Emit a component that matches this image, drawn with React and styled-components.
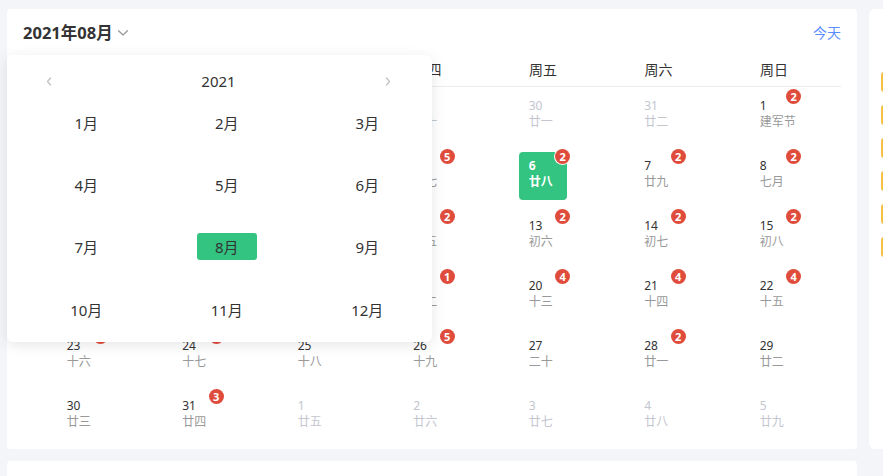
import React from "react";
import styled, { createGlobalStyle } from "styled-components";

const GlobalStyle = createGlobalStyle`
  html, body { margin: 0; padding: 0; }
  body {
    background: #f4f5f9;
    font-family: "Noto Sans", "Noto Sans CJK SC", sans-serif;
    color: #333;
    overflow: hidden;
  }
`;

const Page = styled.div`
  box-sizing: border-box;
  display: flex;
  align-items: flex-start;
  gap: 12px;
  width: 100%;
  height: 476px;
  padding: 9px 0 0 7px;
  overflow: hidden;
`;

const LeftColumn = styled.div`
  display: flex;
  flex-direction: column;
  gap: 12px;
  width: 850px;
  flex-shrink: 0;
`;

const Card = styled.div`
  position: relative;
  box-sizing: border-box;
  height: 440px;
  padding: 14px 16px 0;
  background: #fff;
  border-radius: 4px;
`;

const BottomCard = styled.div`
  height: 15px;
  background: #fff;
  border-radius: 4px 4px 0 0;
`;

const SideCard = styled.div`
  box-sizing: border-box;
  flex: 1;
  min-width: 0;
  height: 440px;
  padding: 63px 0 0 12px;
  background: #fff;
  border-radius: 6px 0 0 6px;
  display: flex;
  flex-direction: column;
  gap: 13px;
  overflow: hidden;
`;

const Tag = styled.div`
  flex-shrink: 0;
  width: 140px;
  height: 20px;
  background: #f6c045;
  border-radius: 3px;
`;

const Header = styled.div`
  display: flex;
  align-items: center;
  justify-content: space-between;
  height: 20px;
`;

const Title = styled.div`
  display: flex;
  align-items: center;
  gap: 4px;
  font-size: 16.5px;
  font-weight: 700;
  color: #333;
  line-height: 20px;
`;

const TodayLink = styled.span`
  font-size: 14px;
  color: #5b8cff;
  line-height: 20px;
`;

const WeekBar = styled.div`
  margin-top: 10px;
  border-bottom: 1px solid #ebedf0;
`;

const SevenCols = styled.div`
  display: grid;
  grid-template-columns: repeat(7, 115.5px);
`;

const WeekLabel = styled.div`
  height: 33px;
  line-height: 33px;
  padding-left: 44px;
  font-size: 14px;
  color: #333;
`;

const DayGrid = styled(SevenCols)`
  grid-auto-rows: 60px;
`;

const Cell = styled.div`
  display: flex;
  justify-content: center;
  align-items: flex-start;
  padding-top: 5px;
`;

const DayBox = styled.div`
  position: relative;
  box-sizing: border-box;
  width: 48px;
  height: 48px;
  padding: 6px 0 0 10px;
  border-radius: 4px;
  background: ${(p) => (p.$selected ? "#33c482" : "transparent")};
`;

const DayNum = styled.div`
  font-size: 12px;
  line-height: 16px;
  font-weight: ${(p) => (p.$selected ? 700 : 400)};
  color: ${(p) => (p.$selected ? "#fff" : p.$other ? "#c3c6cf" : "#333")};
`;

const Lunar = styled.div`
  font-size: 12px;
  line-height: 16px;
  white-space: nowrap;
  font-weight: ${(p) => (p.$selected ? 700 : 400)};
  color: ${(p) => (p.$selected ? "#fff" : p.$other ? "#c3c6cf" : "#999")};
`;

const Badge = styled.span`
  position: absolute;
  top: -3.5px;
  right: -3.5px;
  width: 15px;
  height: 15px;
  border-radius: 50%;
  background: #e04c3c;
  box-shadow: 0 0 0 1px #fff;
  color: #fff;
  font-size: 11px;
  font-weight: 700;
  line-height: 15px;
  text-align: center;
`;

const Popup = styled.div`
  position: absolute;
  left: 0;
  top: 46px;
  z-index: 2;
  box-sizing: border-box;
  width: 425px;
  height: 287px;
  padding-top: 16px;
  background: #fff;
  border-radius: 6px;
  box-shadow: 0 3px 14px rgba(0, 0, 0, 0.1);
  overflow: hidden;
`;

const YearRow = styled.div`
  display: flex;
  align-items: center;
  justify-content: space-between;
  height: 20px;
  padding: 0 40px 0 38px;
`;

const YearText = styled.span`
  font-size: 15px;
  color: #333;
`;

const Arrow = styled.span`
  display: flex;
  width: 8px;
  justify-content: center;
`;

const MonthGrid = styled.div`
  display: grid;
  grid-template-columns: repeat(3, 140.5px);
  grid-auto-rows: 62.33px;
  padding-left: 9px;
`;

const MonthCell = styled.div`
  display: flex;
  align-items: center;
  justify-content: center;
`;

const MonthLabel = styled.span`
  display: inline-flex;
  align-items: center;
  justify-content: center;
  width: 60px;
  height: 27px;
  border-radius: 3px;
  font-size: 15px;
  color: #333;
  background: ${(p) => (p.$selected ? "#33c482" : "transparent")};
`;

const weekdays = ["周一", "周二", "周三", "周四", "周五", "周六", "周日"];

const days = [
  ["26", "十七", 1], ["27", "十八", 1], ["28", "十九", 1], ["29", "二十", 1], ["30", "廿一", 1], ["31", "廿二", 1], ["1", "建军节", 0, "2"],
  ["2", "廿四", 0, "1"], ["3", "廿五", 0, "2"], ["4", "廿六", 0, "3"], ["5", "廿七", 0, "5"], ["6", "廿八", 0, "2", true], ["7", "廿九", 0, "2"], ["8", "七月", 0, "2"],
  ["9", "初二", 0, "2"], ["10", "初三", 0, "1"], ["11", "初四", 0], ["12", "初五", 0, "2"], ["13", "初六", 0, "2"], ["14", "初七", 0, "2"], ["15", "初八", 0, "2"],
  ["16", "初九", 0, "3"], ["17", "初十", 0], ["18", "十一", 0, "2"], ["19", "十二", 0, "1"], ["20", "十三", 0, "4"], ["21", "十四", 0, "4"], ["22", "十五", 0, "4"],
  ["23", "十六", 0, "2"], ["24", "十七", 0, "1"], ["25", "十八", 0], ["26", "十九", 0, "5"], ["27", "二十", 0], ["28", "廿一", 0, "2"], ["29", "廿二", 0],
  ["30", "廿三", 0], ["31", "廿四", 0, "3"], ["1", "廿五", 1], ["2", "廿六", 1], ["3", "廿七", 1], ["4", "廿八", 1], ["5", "廿九", 1],
];

const months = ["1月", "2月", "3月", "4月", "5月", "6月", "7月", "8月", "9月", "10月", "11月", "12月"];

const ChevronDown = () => (
  <svg width="12" height="8" viewBox="0 0 12 8" fill="none">
    <path d="M1.5 1.8 L6 6 L10.5 1.8" stroke="#9a9a9a" strokeWidth="1.3" strokeLinecap="round" strokeLinejoin="round" />
  </svg>
);

const Angle = ({ dir }) => (
  <svg width="6" height="9" viewBox="0 0 6 9" fill="none">
    <path
      d={dir === "left" ? "M4.5 1 L1.5 4.5 L4.5 8" : "M1.5 1 L4.5 4.5 L1.5 8"}
      stroke="#c2c2c2"
      strokeWidth="1.3"
      strokeLinecap="round"
      strokeLinejoin="round"
    />
  </svg>
);

export default function App() {
  return (
    <>
      <GlobalStyle />
      <Page>
        <LeftColumn>
          <Card>
            <Header>
              <Title>
                2021年08月
                <ChevronDown />
              </Title>
              <TodayLink>今天</TodayLink>
            </Header>
            <WeekBar>
              <SevenCols>
                {weekdays.map((w) => (
                  <WeekLabel key={w}>{w}</WeekLabel>
                ))}
              </SevenCols>
            </WeekBar>
            <DayGrid>
              {days.map(([num, lunar, other, badge, selected], i) => (
                <Cell key={i}>
                  <DayBox $selected={selected}>
                    <DayNum $other={other} $selected={selected}>{num}</DayNum>
                    <Lunar $other={other} $selected={selected}>{lunar}</Lunar>
                    {badge && <Badge>{badge}</Badge>}
                  </DayBox>
                </Cell>
              ))}
            </DayGrid>
            <Popup>
              <YearRow>
                <Arrow><Angle dir="left" /></Arrow>
                <YearText>2021</YearText>
                <Arrow><Angle dir="right" /></Arrow>
              </YearRow>
              <MonthGrid>
                {months.map((m) => (
                  <MonthCell key={m}>
                    <MonthLabel $selected={m === "8月"}>{m}</MonthLabel>
                  </MonthCell>
                ))}
              </MonthGrid>
            </Popup>
          </Card>
          <BottomCard />
        </LeftColumn>
        <SideCard>
          {[0, 1, 2, 3, 4, 5].map((i) => (
            <Tag key={i} />
          ))}
        </SideCard>
      </Page>
    </>
  );
}
